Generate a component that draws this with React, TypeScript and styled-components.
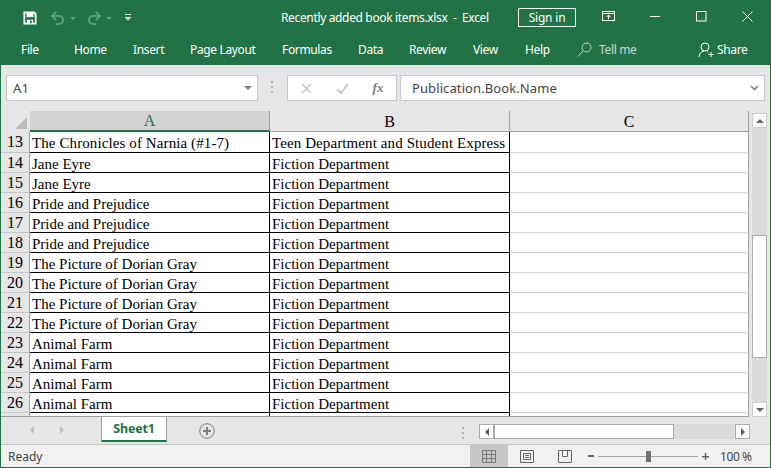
import React from "react";
import styled, { createGlobalStyle } from "styled-components";

const GREEN = "#217346";
const UI_FONT = `"Noto Sans", "Open Sans", sans-serif`;

const GlobalStyle = createGlobalStyle`
  html, body { margin: 0; padding: 0; background: #e6e6e6; }
  body { width: 771px; height: 468px; overflow: hidden; font-family: ${UI_FONT}; }
  * { box-sizing: border-box; }
`;

const Window = styled.div`
  width: 771px;
  height: 468px;
  display: flex;
  flex-direction: column;
  border: solid ${GREEN};
  border-width: 0 1px 1px 1px;
  background: #e6e6e6;
`;

const Header = styled.div`
  height: 65px;
  margin: 0 -1px;
  flex: none;
  background: ${GREEN};
  color: #fff;
  font-size: 12px;
  letter-spacing: -0.35px;
`;

const TitleBar = styled.div`
  height: 35px;
  display: flex;
  align-items: center;
`;

const QuickAccess = styled.div`
  width: 281px;
  flex: none;
  display: flex;
  align-items: center;
  padding-left: 23px;
`;

const QatIcon = styled.svg<{ $gap?: number }>`
  flex: none;
  margin-left: ${(p) => p.$gap ?? 0}px;
`;

const Title = styled.div`
  width: 237px;
  flex: none;
  white-space: pre;
  font-size: 12px;
`;

const SignIn = styled.div`
  width: 58px;
  height: 19px;
  flex: none;
  border: 1px solid #fff;
  display: flex;
  align-items: center;
  justify-content: center;
  font-size: 12px;
  letter-spacing: -0.2px;
  margin-top: -1px;
`;

const WindowControls = styled.div`
  display: flex;
  align-items: center;
  margin-left: 26px;
  margin-top: -3px;
`;

const RibbonTabs = styled.div`
  height: 30px;
  display: flex;
  align-items: flex-start;
  padding-left: 21px;
  padding-top: 6px;
  line-height: 18px;
`;

const RibbonTab = styled.div<{ $w: number; $dim?: boolean }>`
  width: ${(p) => p.$w}px;
  flex: none;
  white-space: nowrap;
  display: flex;
  align-items: center;
  opacity: ${(p) => (p.$dim ? 0.72 : 1)};
`;

const FormulaBar = styled.div`
  height: 46px;
  flex: none;
  display: flex;
  align-items: flex-start;
  padding: 10px 0 0 5px;
`;

const Field = styled.div<{ $w: number }>`
  width: ${(p) => p.$w}px;
  height: 26px;
  flex: none;
  display: flex;
  align-items: center;
  background: #fff;
  border: 1px solid #c6c6c6;
  color: #444;
  font-size: 13px;
  letter-spacing: 0.1px;
`;

const NameText = styled.span`
  padding-left: 6px;
  flex: 1;
`;

const FormulaText = styled.span`
  padding-left: 11px;
  flex: 1;
  font-size: 13px;
  letter-spacing: 0.1px;
`;

const BarDots = styled.div<{ $gap: number; $right: number; $top?: number }>`
  width: 2px;
  flex: none;
  margin: ${(p) => p.$top ?? 5}px ${(p) => p.$right}px 0 ${(p) => p.$gap}px;
  height: 12px;
  display: flex;
  flex-direction: column;
  justify-content: space-between;
  i {
    display: block;
    height: 2px;
    background: #b2b2b2;
  }
`;

const FxButtons = styled(Field)`
  margin-right: 3px;
`;

const FxSlot = styled.div<{ $w: number }>`
  width: ${(p) => p.$w}px;
  display: flex;
  justify-content: center;
  align-items: center;
`;

const FxGlyph = styled.span`
  font-family: "Liberation Serif", serif;
  font-style: italic;
  font-weight: 700;
  font-size: 13px;
  color: #7a7a7a;
`;

const Workspace = styled.div`
  height: 306px;
  flex: none;
  display: flex;
`;

const Sheet = styled.div`
  width: 748px;
  flex: none;
  display: grid;
  grid-template-columns: 29px 240px 240px 239px;
  grid-auto-rows: 20px;
  grid-template-rows: 21px 21px;
  overflow: hidden;
  height: 306px;
  align-content: start;
  border-bottom: 1px solid #9f9f9f;
  font-family: "Liberation Serif", serif;
  font-size: 15px;
  color: #000;
`;

const Corner = styled.div`
  background: #e6e6e6;
  position: relative;
  &::after {
    content: "";
    position: absolute;
    right: 3px;
    bottom: 3px;
    border-style: solid;
    border-width: 0 0 12px 12px;
    border-color: transparent transparent #b9b9b9 transparent;
  }
`;

const ColHead = styled.div<{ $active?: boolean }>`
  display: flex;
  align-items: center;
  justify-content: center;
  font-size: 16px;
  padding-top: 1px;
  background: ${(p) => (p.$active ? "#d2d2d2" : "#e6e6e6")};
  color: ${(p) => (p.$active ? GREEN : "#000")};
  border-right: 1px solid #9f9f9f;
  border-bottom: ${(p) => (p.$active ? `2px solid ${GREEN}` : "1px solid #9f9f9f")};
`;

const RowHead = styled.div`
  display: flex;
  align-items: center;
  justify-content: center;
  font-size: 16px;
  background: #e6e6e6;
  border-bottom: 1px solid #c6c6c6;
  border-right: 1px solid #9f9f9f;
`;

const Cell = styled.div<{ $first?: boolean }>`
  display: flex;
  align-items: center;
  padding: ${(p) => (p.$first ? 2 : 3)}px 0 0 2px;
  letter-spacing: ${(p) => (p.$first ? "0.1px" : "0")};
  white-space: nowrap;
  overflow: hidden;
  background: #fff;
  border-right: 1px solid #000;
  border-bottom: 1px solid #000;
`;

const EmptyCell = styled.div`
  background: #fff;
  border-right: 1px solid #9f9f9f;
  border-bottom: 1px solid #d4d4d4;
`;

const VScroll = styled.div`
  width: 21px;
  flex: none;
  display: flex;
  flex-direction: column;
  align-items: center;
  padding-top: 2px;
`;

const ScrollBtn = styled.div<{ $horizontal?: boolean }>`
  width: 15px;
  height: 15px;
  flex: none;
  display: flex;
  align-items: center;
  justify-content: center;
  background: #fff;
  border: 1px solid ${(p) => (p.$horizontal ? "#ababab" : "#cfcfcf")};
`;

const VTrack = styled.div`
  flex: 1;
  width: 15px;
  background: #dbdbdb;
  padding-top: 107px;
`;

const VThumb = styled.div`
  height: 123px;
  background: #fff;
  border: 1px solid #ababab;
`;

const TabBar = styled.div`
  height: 28px;
  flex: none;
  display: flex;
  align-items: flex-start;
  border-bottom: 1px solid #c6c6c6;
`;

const TabNav = styled.div`
  width: 101px;
  height: 25px;
  flex: none;
  display: flex;
  align-items: center;
  padding-left: 27px;
  gap: 22px;
  border-right: 1px solid #9f9f9f;
`;

const SheetTab = styled.div`
  width: 65px;
  height: 25px;
  flex: none;
  background: #fff;
  border-right: 1px solid #9f9f9f;
  border-bottom: 2px solid ${GREEN};
  color: ${GREEN};
  font-weight: 700;
  font-size: 12.5px;
  letter-spacing: -0.2px;
  display: flex;
  align-items: center;
  justify-content: center;
`;

const AddSheet = styled.svg`
  flex: none;
  margin: 6px 0 0 32px;
`;

const HScroll = styled.div`
  display: flex;
  align-items: flex-start;
  margin: 7px 0 0 0;
`;

const HThumb = styled.div`
  width: 180px;
  height: 15px;
  flex: none;
  background: #fff;
  border: 1px solid #ababab;
`;

const HTrack = styled.div`
  width: 60px;
  height: 15px;
  flex: none;
  background: #dbdbdb;
  margin-right: 1px;
`;

const StatusBar = styled.div`
  flex: 1;
  display: flex;
  align-items: stretch;
  background: #f1f1f1;
  font-size: 12px;
  color: #444;
`;

const Ready = styled.div`
  width: 469px;
  flex: none;
  padding-left: 7px;
  display: flex;
  align-items: center;
`;

const ViewBtn = styled.div<{ $active?: boolean }>`
  width: 38px;
  flex: none;
  display: flex;
  align-items: center;
  justify-content: center;
  background: ${(p) => (p.$active ? "#c6c6c6" : "transparent")};
`;

const ZoomArea = styled.div`
  display: flex;
  align-items: center;
  margin-left: 4px;
`;

const ZoomTrack = styled.div`
  width: 100px;
  height: 1px;
  flex: none;
  margin: 0 4px;
  background: #a6a6a6;
  position: relative;
`;

const ZoomHandle = styled.div`
  position: absolute;
  left: 48px;
  top: -5px;
  width: 5px;
  height: 11px;
  background: #6f6f6f;
`;

const ZoomLabel = styled.div`
  margin-left: 11px;
  white-space: nowrap;
  font-size: 12px;
  letter-spacing: -0.4px;
`;

type Row = [number, string, string];

const books: Row[] = [
  [13, "The Chronicles of Narnia (#1-7)", "Teen Department and Student Express"],
  [14, "Jane Eyre", "Fiction Department"],
  [15, "Jane Eyre", "Fiction Department"],
  [16, "Pride and Prejudice", "Fiction Department"],
  [17, "Pride and Prejudice", "Fiction Department"],
  [18, "Pride and Prejudice", "Fiction Department"],
  [19, "The Picture of Dorian Gray", "Fiction Department"],
  [20, "The Picture of Dorian Gray", "Fiction Department"],
  [21, "The Picture of Dorian Gray", "Fiction Department"],
  [22, "The Picture of Dorian Gray", "Fiction Department"],
  [23, "Animal Farm", "Fiction Department"],
  [24, "Animal Farm", "Fiction Department"],
  [25, "Animal Farm", "Fiction Department"],
  [26, "Animal Farm", "Fiction Department"],
  [27, "", ""],
];

const tabs: [string, number][] = [
  ["File", 53],
  ["Home", 59],
  ["Insert", 57],
  ["Page Layout", 92],
  ["Formulas", 76],
  ["Data", 51],
  ["Review", 64],
  ["View", 52],
  ["Help", 52],
];

function Arrow({ dir, color = "#606060", size = 8 }: { dir: "up" | "down" | "left" | "right"; color?: string; size?: number }) {
  const points = {
    up: "0,6 4,2 8,6",
    down: "0,2 8,2 4,6",
    left: "6,0 6,8 2,4",
    right: "2,0 2,8 6,4",
  }[dir];
  return (
    <svg width={size} height={size} viewBox="0 0 8 8">
      <polygon points={points} fill={color} />
    </svg>
  );
}

export default function App() {
  return (
    <>
      <GlobalStyle />
      <Window>
        <Header>
          <TitleBar>
            <QuickAccess>
              <QatIcon width="14" height="14" viewBox="0 0 16 16">
                <path d="M1.5 1.5h11l2 2v11h-13z" fill="none" stroke="#fff" strokeWidth="2" />
                <rect x="4" y="2" width="8" height="5" fill="#fff" />
                <rect x="4.5" y="10" width="7" height="4" fill="#fff" />
                <rect x="8" y="11" width="2" height="3" fill={GREEN} />
              </QatIcon>
              <QatIcon $gap={13} width="16" height="16" viewBox="0 0 16 16" fill="none" stroke="#5f9f7c" strokeWidth="2">
                <path d="M6 2 2 6l4 4" />
                <path d="M3 6h6a4 4 0 0 1 0 8H6" />
              </QatIcon>
              <QatIcon $gap={3} width="8" height="8" viewBox="0 0 8 8">
                <polygon points="1,3 7,3 4,6" fill="#5f9f7c" />
              </QatIcon>
              <QatIcon $gap={9} width="16" height="16" viewBox="0 0 16 16" fill="none" stroke="#5f9f7c" strokeWidth="2">
                <path d="m10 2 4 4-4 4" />
                <path d="M13 6H7a4 4 0 0 0 0 8h3" />
              </QatIcon>
              <QatIcon $gap={3} width="8" height="8" viewBox="0 0 8 8">
                <polygon points="1,3 7,3 4,6" fill="#5f9f7c" />
              </QatIcon>
              <QatIcon $gap={11} width="8" height="9" viewBox="0 0 8 9">
                <rect x="1" y="1" width="6" height="1" fill="#fff" />
                <polygon points="1,4 7,4 4,7.5" fill="#fff" />
              </QatIcon>
            </QuickAccess>
            <Title>{"Recently added book items.xlsx  -  Excel"}</Title>
            <SignIn>Sign in</SignIn>
            <WindowControls>
              <svg width="15" height="11" viewBox="0 0 15 11" fill="none" stroke="#fff">
                <rect x="0.5" y="0.5" width="12" height="9" />
                <path d="M0.5 2.5h12M6.5 8.500v-4M4.500 6l2-2 2 2" />
              </svg>
              <svg style={{ marginLeft: 33 }} width="11" height="11" viewBox="0 0 11 11" stroke="#fff">
                <path d="M0 5.5h10" />
              </svg>
              <svg style={{ marginLeft: 35 }} width="11" height="11" viewBox="0 0 11 11" fill="none" stroke="#fff">
                <rect x="0.5" y="0.5" width="9.5" height="9.5" />
              </svg>
              <svg style={{ marginLeft: 35 }} width="11" height="11" viewBox="0 0 11 11" stroke="#fff">
                <path d="M0.5 0.5l10 10M10.500 0.5l-10 10" />
              </svg>
            </WindowControls>
          </TitleBar>
          <RibbonTabs>
            {tabs.map(([label, w]) => (
              <RibbonTab key={label} $w={w}>
                {label}
              </RibbonTab>
            ))}
            <RibbonTab $w={121} $dim>
              <svg style={{ marginRight: 7 }} width="15" height="16" viewBox="0 0 15 16" fill="none" stroke="#fff">
                <circle cx="9.5" cy="5.5" r="4.5" />
                <path d="M6 9 1 14.5" />
              </svg>
              Tell me
            </RibbonTab>
            <RibbonTab $w={56}>
              <svg style={{ marginRight: 3 }} width="16" height="16" viewBox="0 0 16 16" fill="none" stroke="#fff">
                <circle cx="7" cy="5" r="4" />
                <path d="M1 15c0-3 2-5.500 5-6M9 9.500l1 .5M10.500 12.500h5M13 10v5" />
              </svg>
              Share
            </RibbonTab>
          </RibbonTabs>
        </Header>

        <FormulaBar>
          <Field $w={252}>
            <NameText>A1</NameText>
            <svg style={{ marginRight: 5 }} width="8" height="8" viewBox="0 0 8 8">
              <polygon points="0,2 8,2 4,6" fill="#808080" />
            </svg>
          </Field>
          <BarDots $gap={13} $right={14} $top={6}>
            <i />
            <i />
            <i />
          </BarDots>
          <FxButtons $w={110}>
            <FxSlot $w={36}>
              <svg width="11" height="11" viewBox="0 0 11 11" stroke="#c8c8c8" strokeWidth="1.6">
                <path d="M1 1l9 9M10 1l-9 9" />
              </svg>
            </FxSlot>
            <FxSlot $w={36}>
              <svg width="13" height="11" viewBox="0 0 13 11" fill="none" stroke="#c8c8c8" strokeWidth="2">
                <path d="M1 6l4 4 7-9" />
              </svg>
            </FxSlot>
            <FxSlot $w={36}>
              <FxGlyph>fx</FxGlyph>
            </FxSlot>
          </FxButtons>
          <Field $w={365}>
            <FormulaText>Publication.Book.Name</FormulaText>
            <svg style={{ marginRight: 5 }} width="9" height="8" viewBox="0 0 9 8" fill="none" stroke="#808080" strokeWidth="1.6">
              <path d="M1 2l3.500 3.500L8 2" />
            </svg>
          </Field>
        </FormulaBar>

        <Workspace>
          <Sheet>
            <Corner />
            <ColHead $active>A</ColHead>
            <ColHead>B</ColHead>
            <ColHead>C</ColHead>
            {books.map(([n, title, dept]) => (
              <React.Fragment key={n}>
                <RowHead>{title ? n : ""}</RowHead>
                {title ? <Cell $first={n === 13}>{title}</Cell> : <Cell />}
                {dept ? <Cell $first={n === 13}>{dept}</Cell> : <Cell />}
                <EmptyCell />
              </React.Fragment>
            ))}
          </Sheet>
          <VScroll>
            <ScrollBtn>
              <Arrow dir="up" />
            </ScrollBtn>
            <VTrack>
              <VThumb />
            </VTrack>
            <ScrollBtn>
              <Arrow dir="down" />
            </ScrollBtn>
          </VScroll>
        </Workspace>

        <TabBar>
          <TabNav>
            <Arrow dir="left" color="#c0c0c0" />
            <Arrow dir="right" color="#c0c0c0" />
          </TabNav>
          <SheetTab>Sheet1</SheetTab>
          <AddSheet width="16" height="16" viewBox="0 0 16 16" fill="none" stroke="#7f7f7f">
            <circle cx="8" cy="8" r="7.300" />
            <path d="M8 4v8M4 8h8" strokeWidth="2" />
          </AddSheet>
          <BarDots $gap={247} $right={15} $top={10}>
            <i />
            <i />
            <i />
          </BarDots>
          <HScroll>
            <ScrollBtn $horizontal>
              <Arrow dir="left" />
            </ScrollBtn>
            <HThumb />
            <HTrack />
            <ScrollBtn $horizontal>
              <Arrow dir="right" />
            </ScrollBtn>
          </HScroll>
        </TabBar>

        <StatusBar>
          <Ready>Ready</Ready>
          <ViewBtn $active>
            <svg width="14" height="13" viewBox="0 0 14 13" fill="none" stroke="#7a7a7a">
              <path d="M.5.500h13v12H.5zM.5 4.500h13M.5 8.500h13M4.500.500v12M9.500.500v12" />
            </svg>
          </ViewBtn>
          <ViewBtn>
            <svg width="14" height="13" viewBox="0 0 14 13" fill="none" stroke="#666">
              <path d="M.5.500h13v12H.5zM3.500 3.500h7v6h-7zM5 5.500h4M5 7.500h4" />
            </svg>
          </ViewBtn>
          <ViewBtn>
            <svg width="14" height="13" viewBox="0 0 14 13" fill="none" stroke="#666">
              <path d="M.5.500h13v12H.5zM4.500.500v6h5v-6" />
            </svg>
          </ViewBtn>
          <ZoomArea>
            <svg width="6" height="6" viewBox="0 0 6 6">
              <rect y="2" width="6" height="2" fill="#666" />
            </svg>
            <ZoomTrack>
              <ZoomHandle />
            </ZoomTrack>
            <svg width="7" height="7" viewBox="0 0 7 7">
              <path d="M0 3h7v1.500H0zM2.800 0h1.500v7H2.800z" fill="#666" />
            </svg>
            <ZoomLabel>100 %</ZoomLabel>
          </ZoomArea>
        </StatusBar>
      </Window>
    </>
  );
}
